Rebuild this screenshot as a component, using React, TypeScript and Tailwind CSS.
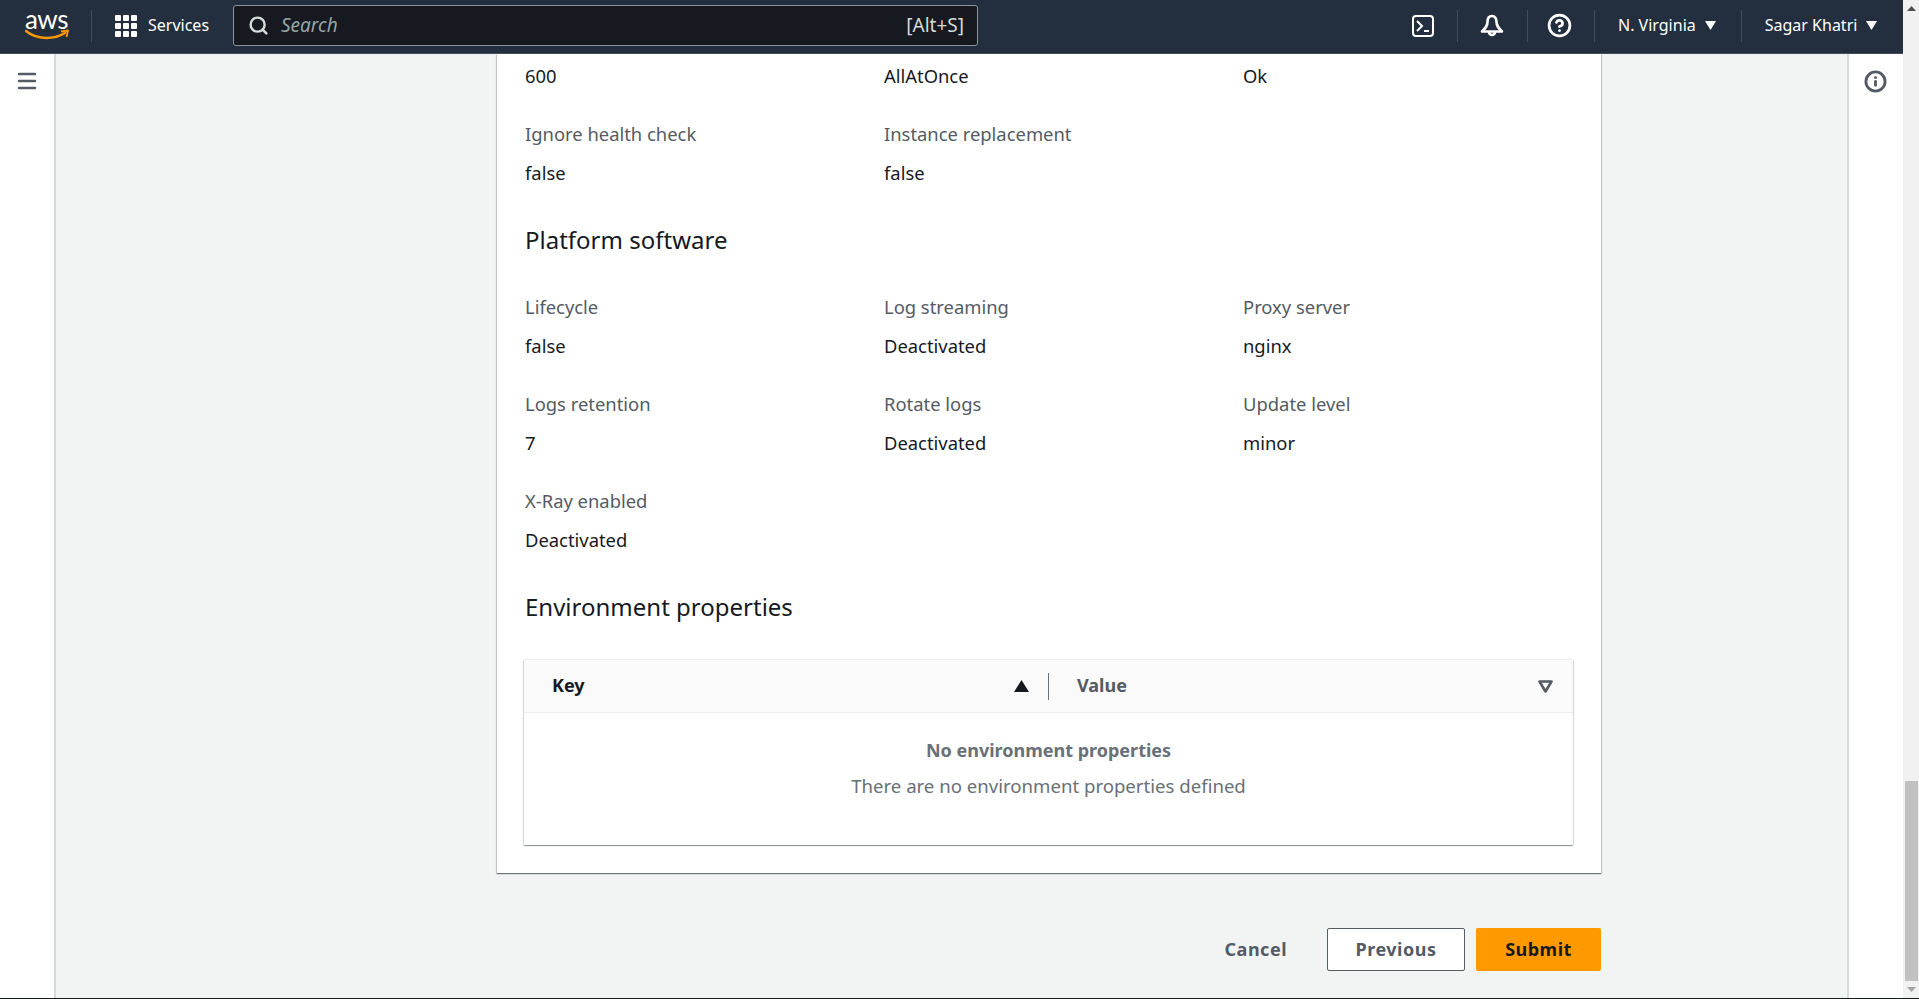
import { Search, Menu, CircleHelp, Info } from 'lucide-react';

const font = "font-['Noto_Sans','Open_Sans',sans-serif]";

function Field({ label, value, flush }: { label?: string; value?: string; flush?: boolean }) {
  return (
    <div>
      {label && <div className="h-[23px] text-[18.4px] leading-[23px] text-[#545b64]">{label}</div>}
      {value && (
        <div className={`h-[23px] text-[18.4px] leading-[23px] text-[#16191f] ${flush ? '' : 'mt-[16px]'}`}>{value}</div>
      )}
    </div>
  );
}

function Caret() {
  return (
    <svg width="11" height="9" viewBox="0 0 11 9" className="shrink-0">
      <path d="M0 0h11L5.500 9z" fill="#fff" />
    </svg>
  );
}

function Divider({ className }: { className: string }) {
  return <div className={`h-[32px] w-px shrink-0 bg-[#414d5c] ${className}`} />;
}

function TopBar() {
  return (
    <header className="flex h-[54px] shrink-0 items-center border-b border-[#414d5c] bg-[#232f3e] pb-[2px] text-white">
      {/* Logo */}
      <div className="relative ml-[25px] h-[30px] w-[44px] shrink-0">
        <span className="absolute -top-[7px] left-0 font-['Lato',sans-serif] text-[26px] leading-[30px] tracking-[-0.5px]">aws</span>
        <svg width="44" height="12" viewBox="0 0 44 12" className="absolute top-[18px] left-0">
          <path d="M1 2c6 5 14 7 21 7 6 0 13-2 18-5" fill="none" stroke="#ff9900" strokeWidth="2.400" strokeLinecap="round" />
          <path d="M36 2.500l7-1-1.500 6.500" fill="none" stroke="#ff9900" strokeWidth="1.800" strokeLinejoin="round" />
        </svg>
      </div>
      <div className="ml-[22px] h-[32px] w-px shrink-0 bg-[#414d5c]" />
      <svg width="22" height="22" viewBox="0 0 22 22" className="ml-[23px] shrink-0" fill="#fff">
        {[0, 8, 16].map((y) => [0, 8, 16].map((x) => <rect key={`${x}-${y}`} x={x} y={y} width="6" height="6" rx="1" />))}
      </svg>
      <span className="mb-[2px] ml-[11px] w-[62px] text-[16px] whitespace-nowrap">Services</span>

      <div className="ml-[23px] flex h-[41px] w-[745px] shrink-0 items-center rounded-[3px] border border-[#879596] bg-[#16191f] pr-[13px] pl-[14px]">
        <Search size={21} strokeWidth={2.800} className="text-[#d5dbdb]" />
        <span className="ml-[12px] text-[19px] text-[#95a5a6] italic">Search</span>
        <span className="ml-auto text-[19px] text-[#d5dbdb]">[Alt+S]</span>
      </div>

      <div className="ml-[434px] flex h-[22px] w-[22px] shrink-0 items-center justify-center rounded-[4px] border-2 border-white">
        <svg width="16" height="14" viewBox="0 0 16 14" fill="none" stroke="#fff" strokeWidth="2">
          <path d="M2 2l5 5-5 5M9 12h5" />
        </svg>
      </div>
      <Divider className="ml-[23px]" />
      <svg width="24" height="24" viewBox="0 0 24 24" fill="none" stroke="#fff" strokeWidth="2.600" strokeLinejoin="round" className="ml-[22px] shrink-0">
        <path d="M12 2c-3 0-4.500 2.500-4.500 6 0 4-2 6-5.500 9.500h20c-3.500-3.500-5.500-5.500-5.500-9.500 0-3.500-1.500-6-4.500-6z" />
        <path d="M9 18a3 3 0 0 0 6 0" />
      </svg>
      <Divider className="ml-[23px]" />
      <CircleHelp size={25} strokeWidth={2.600} className="ml-[19px] shrink-0" />
      <Divider className="ml-[22px]" />
      <span className="mb-[2px] ml-[23px] text-[16px] whitespace-nowrap">N. Virginia</span>
      <span className="ml-[9px]"><Caret /></span>
      <Divider className="ml-[25px]" />
      <span className="mb-[2px] ml-[23px] text-[16px] whitespace-nowrap">Sagar Khatri</span>
      <span className="ml-[9px]"><Caret /></span>
    </header>
  );
}

function EnvTable() {
  return (
    <div className="mt-[37px] ml-[-1px] h-[186px] w-[1049px] rounded-[1px] border-t border-[#eaeded] bg-white shadow-[0_1px_1px_0_rgba(0,28,36,0.3),1px_1px_1px_0_rgba(0,28,36,0.15),-1px_1px_1px_0_rgba(0,28,36,0.15)]">
      <div className="flex h-[53px] items-center border-b border-[#eaeded] bg-[#fafafa] text-[18px] font-bold">
        <div className="mb-[2px] ml-[28px] text-[#16191f]">Key</div>
        <svg width="15" height="12" viewBox="0 0 15 12" className="ml-auto"><path d="M7.500 0L15 12H0z" fill="#16191f" /></svg>
        <div className="ml-[19px] h-[27px] w-px bg-[#687078]" />
        <div className="mb-[2px] ml-[28px] w-[461px] text-[#545b64]">Value</div>
        <svg width="15" height="13" viewBox="0 0 15 13" fill="none" stroke="#545b64" strokeWidth="2.600" strokeLinejoin="round" className="mr-[20px]">
          <path d="M1.500 1.500h12l-6 10z" />
        </svg>
      </div>
      <div className="pt-[26px] text-center leading-[23px] text-[#687078]">
        <div className="text-[18px] font-bold">No environment properties</div>
        <div className="mt-[12px] text-[18.6px]">There are no environment properties defined</div>
      </div>
    </div>
  );
}

export default function App() {
  return (
    <div className={`flex h-[999px] w-full overflow-hidden border-b border-[#16191f] ${font}`}>
      <div className="flex min-w-0 flex-1 flex-col">
        <TopBar />
        <div className="flex min-h-0 flex-1">
          {/* Left nav */}
          <div className="w-[56px] shrink-0 border-r-2 border-[#d5dbdb] bg-white pt-[15px] pl-[15px]">
            <Menu size={24} strokeWidth={2.400} className="text-[#545b64]" />
          </div>

          {/* Main */}
          <main className="min-w-0 flex-1 bg-[#f2f3f3] pl-[441px]">
            <section className="h-[819px] w-[1104px] bg-white pt-[10px] pl-[28px] shadow-[0_1px_1px_0_rgba(0,28,36,0.4),1px_1px_1px_0_rgba(0,28,36,0.15),-1px_1px_1px_0_rgba(0,28,36,0.15)]">
              <div className="grid grid-cols-[359px_359px_359px] gap-y-[35px]">
                <Field value="600" flush />
                <Field value="AllAtOnce" flush />
                <Field value="Ok" flush />
                <Field label="Ignore health check" value="false" />
                <Field label="Instance replacement" value="false" />
                <Field />
              </div>
              <h2 className="mt-[41px] text-[24px] leading-[30px] text-[#16191f]">Platform software</h2>
              <div className="mt-[40px] grid grid-cols-[359px_359px_359px] gap-y-[35px]">
                <Field label="Lifecycle" value="false" />
                <Field label="Log streaming" value="Deactivated" />
                <Field label="Proxy server" value="nginx" />
                <Field label="Logs retention" value="7" />
                <Field label="Rotate logs" value="Deactivated" />
                <Field label="Update level" value="minor" />
                <Field label="X-Ray enabled" value="Deactivated" />
              </div>
              <h2 className="mt-[41px] text-[24px] leading-[30px] text-[#16191f]">Environment properties</h2>
              <EnvTable />
            </section>
            <div className="mt-[55px] flex h-[43px] w-[1104px] items-center justify-end text-[18px] font-bold tracking-[0.5px]">
              <span className="text-[#545b64]">Cancel</span>
              <button className="ml-[40px] h-[43px] w-[138px] rounded-[2px] border border-[#545b64] bg-white text-[#545b64]">Previous</button>
              <button className="ml-[11px] h-[43px] w-[125px] rounded-[2px] bg-[#ff9900] text-[#16191f]">Submit</button>
            </div>
          </main>

          {/* Right tools */}
          <div className="w-[56px] shrink-0 border-l-2 border-[#d5dbdb] bg-white pt-[16px] pl-[15px]">
            <Info size={23} strokeWidth={3} className="text-[#545b64]" />
          </div>
        </div>
      </div>

      {/* Scrollbar */}
      <div className="flex w-[16px] shrink-0 flex-col items-center bg-[#f1f1f1]">
        <svg width="9" height="5" viewBox="0 0 9 5" className="mt-[6px]"><path d="M4.500 0L9 5H0z" fill="#505050" /></svg>
        <div className="mt-[770px] h-[200px] w-[13px] bg-[#c1c1c1]" />
        <svg width="9" height="5" viewBox="0 0 9 5" className="mt-[6px]"><path d="M0 0h9L4.500 5z" fill="#a3a3a3" /></svg>
      </div>
    </div>
  );
}
